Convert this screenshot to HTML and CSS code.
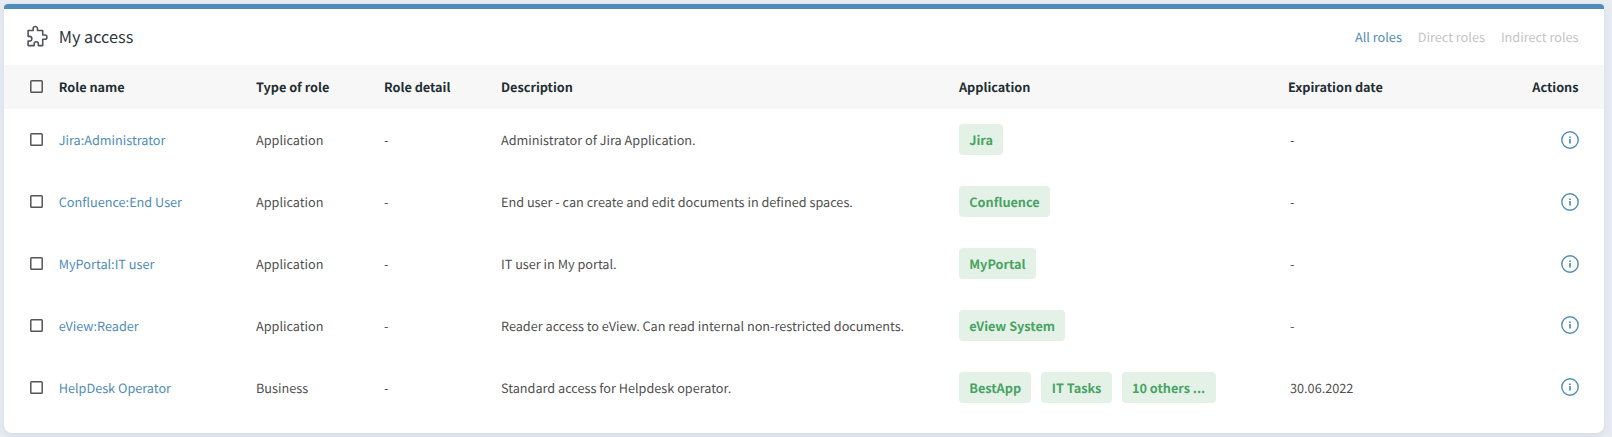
FILE: index.html
```html
<!DOCTYPE html>
<html lang="en">
<head>
<meta charset="utf-8">
<title>My access</title>
<link rel="stylesheet" href="styles.css">
</head>
<body>
<svg class="defs" aria-hidden="true">
  <symbol id="info" viewBox="0 0 18 18">
    <circle cx="9" cy="9" r="8.2" fill="none" stroke="currentColor" stroke-width="1.4"/>
    <path d="M9 8v4.6M9 5.6v1.3" fill="none" stroke="currentColor" stroke-width="1.7"/>
  </symbol>
  <symbol id="box" viewBox="0 0 13 13">
    <rect x=".8" y=".8" width="11.4" height="11.4" rx=".8" fill="none" stroke="currentColor" stroke-width="1.5"/>
  </symbol>
</svg>
<main class="card">
  <header class="card-head">
    <svg class="puzzle" viewBox="0 0 22 22"><path d="M2 9V5.2h4.8V3.6a2.1 2.1 0 0 1 4.2 0v1.6h5v4.4h2a2 2 0 0 1 0 4h-2v6.1h-4.2v-1.6a2 2 0 0 0-4 0v1.6H2v-4.4h1.4a2.2 2.2 0 0 0 0-4.4H2z"/></svg>
    <h1>My access</h1>
    <nav class="filters"><a class="active">All roles</a><a>Direct roles</a><a>Indirect roles</a></nav>
  </header>
  <div class="row head">
    <svg class="check"><use href="#box"/></svg><span>Role name</span><span>Type of role</span><span>Role detail</span><span>Description</span><span>Application</span><span>Expiration date</span><span class="end">Actions</span>
  </div>
  <div class="row">
    <svg class="check"><use href="#box"/></svg><a class="role">Jira:Administrator</a><span>Application</span><span>-</span><span>Administrator of Jira Application.</span><div class="tags"><b>Jira</b></div><span class="date">-</span><svg class="info"><use href="#info"/></svg>
  </div>
  <div class="row">
    <svg class="check"><use href="#box"/></svg><a class="role">Confluence:End User</a><span>Application</span><span>-</span><span>End user - can create and edit documents in defined spaces.</span><div class="tags"><b>Confluence</b></div><span class="date">-</span><svg class="info"><use href="#info"/></svg>
  </div>
  <div class="row">
    <svg class="check"><use href="#box"/></svg><a class="role">MyPortal:IT user</a><span>Application</span><span>-</span><span>IT user in My portal.</span><div class="tags"><b>MyPortal</b></div><span class="date">-</span><svg class="info"><use href="#info"/></svg>
  </div>
  <div class="row">
    <svg class="check"><use href="#box"/></svg><a class="role">eView:Reader</a><span>Application</span><span>-</span><span>Reader access to eView. Can read internal non-restricted documents.</span><div class="tags"><b>eView System</b></div><span class="date">-</span><svg class="info"><use href="#info"/></svg>
  </div>
  <div class="row">
    <svg class="check"><use href="#box"/></svg><a class="role">HelpDesk Operator</a><span>Business</span><span>-</span><span>Standard access for Helpdesk operator.</span><div class="tags"><b>BestApp</b><b>IT Tasks</b><b>10 others ...</b></div><span class="date">30.06.2022</span><svg class="info"><use href="#info"/></svg>
  </div>
</main>
</body>
</html>
```
FILE: styles.css
```css
* { box-sizing: border-box; }
body {
  margin: 0;
  padding: 4px 8px 0 4px;
  height: 437px;
  overflow: hidden;
  background: #e9ecf2;
  color: #505050;
  font: 12.7px/20px "Noto Sans CJK SC", "Noto Sans", sans-serif;
  text-rendering: geometricPrecision;
}
.defs { position: absolute; width: 0; height: 0; }
.card {
  height: 429px;
  overflow: hidden;
  border-radius: 4px 4px 8px 8px;
  border-top: 5px solid #4f8dba;
  background: #fff;
  box-shadow: 0 3px 10px rgba(120, 150, 185, .2);
}
.card-head {
  display: flex;
  align-items: center;
  height: 56px;
  padding: 0 25.5px 0 22px;
}
.puzzle {
  width: 23px;
  height: 23px;
  margin: 0 9.7px 1px 0;
  fill: none;
  stroke: #505457;
  stroke-width: 1.5;
  stroke-linejoin: round;
}
h1 { margin: 0 0 1px; color: #2d373c; font-size: 16.3px; font-weight: 400; line-height: 23px; }
.filters { display: flex; gap: 16px; margin-left: auto; color: #c4c4c4; }
.filters .active, .role { color: #4f8dba; }
.row {
  display: grid;
  grid-template-columns: 28.7px 197.3px 128px 117px 458px 329px 1fr auto;
  align-items: center;
  height: 61.85px;
  padding: 0 25px 0 26px;
  white-space: nowrap;
}
.row > span, .role { padding-top: .6px; }
.head {
  height: 44px;
  padding-right: 25.5px;
  background: #f7f7f7;
  color: #232e33;
  font-weight: 700;
}
.head > span { padding-top: 0; margin-top: -.6px; }
.check { width: 13px; height: 13px; color: #555; }
.head .check { margin-bottom: 1px; }
.tags { display: flex; gap: 10px; }
.tags b {
  height: 31px;
  padding: 0 10.3px;
  border-radius: 4px;
  background: #e4f1e7;
  color: #48a363;
  line-height: 31px;
}
.row > .date { padding-left: 2px; }
.info { width: 18px; height: 18px; color: #4f8dba; }
```
